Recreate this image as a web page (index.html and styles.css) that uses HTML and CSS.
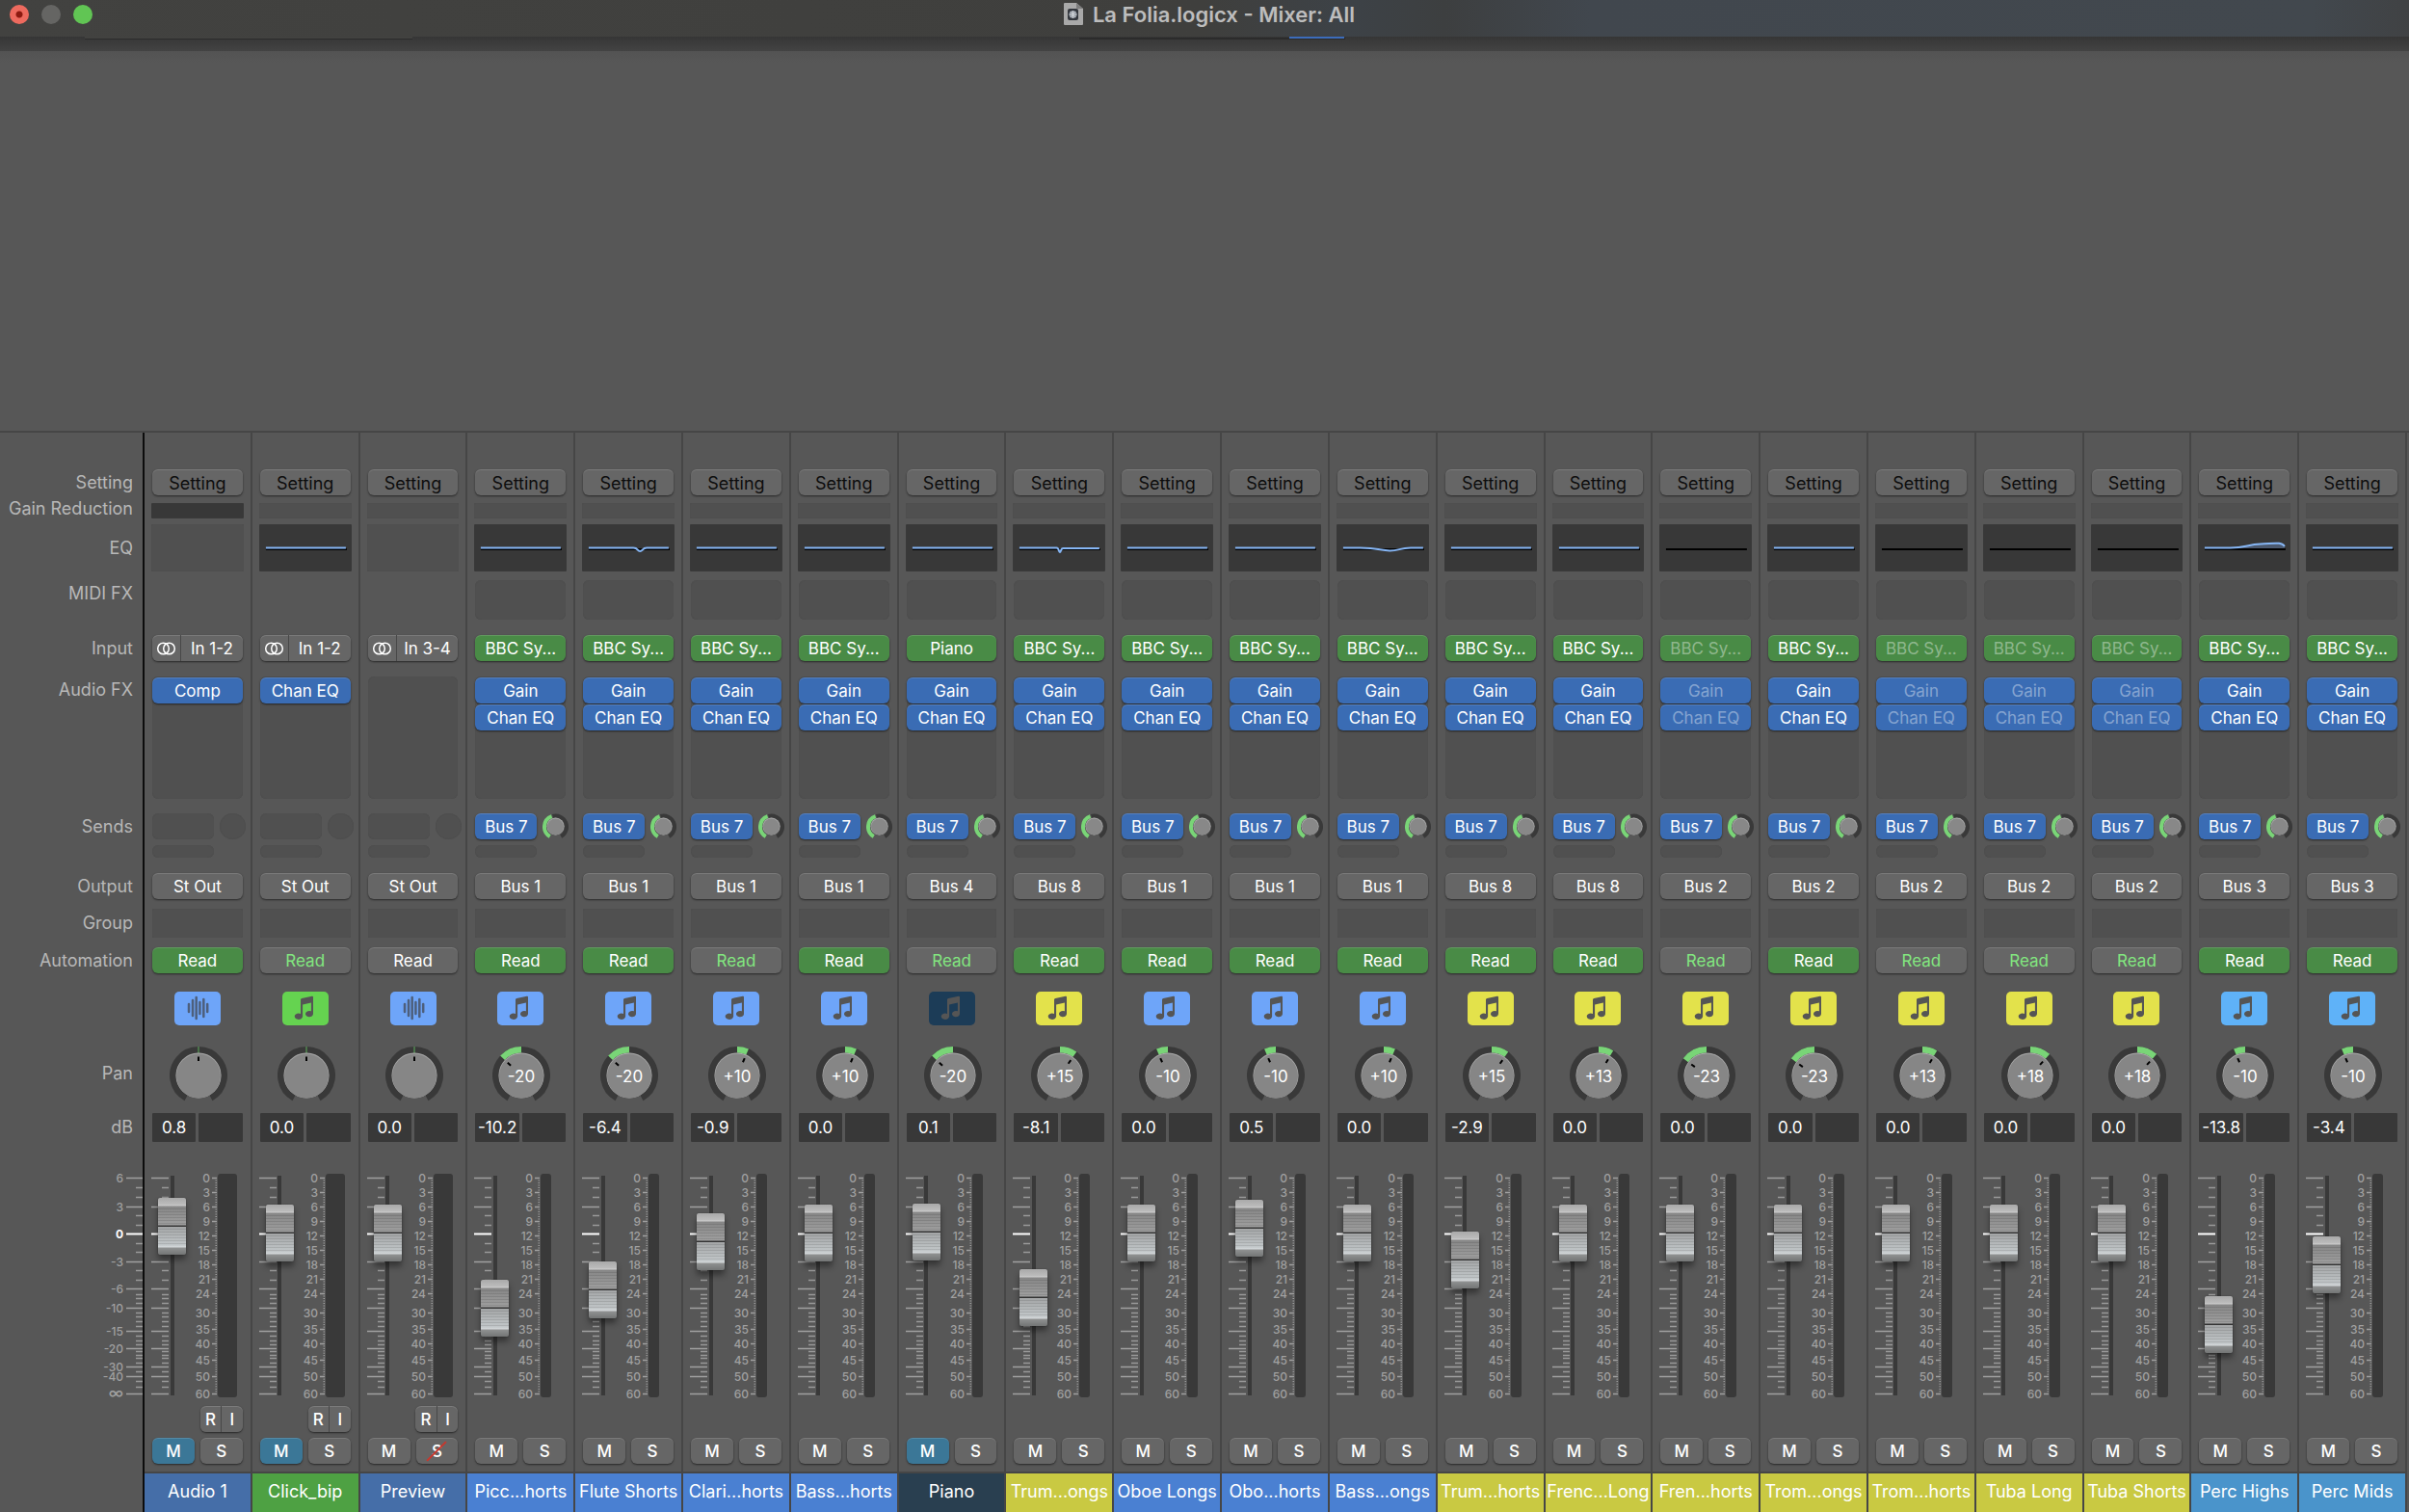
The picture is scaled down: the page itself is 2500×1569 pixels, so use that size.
FILE: index.html
```
<!DOCTYPE html>
<html lang="en">
<head>
  <meta charset="UTF-8">
  <meta name="viewport" content="width=device-width, initial-scale=1.0">
  <title>La Folia.logicx - Mixer: All</title>
  <link rel="stylesheet" href="styles.css">
</head>
<body>
  <header class="titlebar">
    <div class="lights">
      <button class="light close" aria-label="Close"></button>
      <button class="light minimize" aria-label="Minimize"></button>
      <button class="light zoom" aria-label="Zoom"></button>
    </div>
    <h1 class="title">
      <svg class="doc" viewBox="0 0 20 23" aria-hidden="true">
        <path d="M1 0h12l7 6v16a1 1 0 0 1-1 1H1a1 1 0 0 1-1-1V1a1 1 0 0 1 1-1z" fill="#a9a9a9"/>
        <path d="M13 0l7 6h-6a1 1 0 0 1-1-1z" fill="#7d7d7d"/>
        <rect x="4" y="6" width="11" height="12" rx="2" fill="#33373d"/>
        <circle cx="9.5" cy="12" r="4" fill="#8c929b"/>
        <path d="M9.500 8v8M5.500 12h8M7 9l5 6M12 9l-5 6" stroke="#cfd3d8" stroke-width="1"/>
      </svg>
      La Folia.logicx - Mixer: All
    </h1>
  </header>
  <div class="shade"></div>
  <main class="mixer">
    <div class="labels">
      <span>Setting</span>
      <span class="l-gr">Gain Reduction</span>
      <span class="l-eq">EQ</span>
      <span>MIDI FX</span>
      <span>Input</span>
      <span>Audio FX</span>
      <span>Sends</span>
      <span>Output</span>
      <span class="l-group">Group</span>
      <span>Automation</span>
      <span></span>
      <span class="l-pan">Pan</span>
      <span class="l-group">dB</span>
      <div id="ruler"></div>
    </div>
    <div class="strips" id="strips"></div>
  </main>
  <script src="script.js"></script>
</body>
</html>
```
FILE: styles.css
```
*{
  box-sizing: border-box;
}
:root{
  /* one row for each section of a strip, shared with the label column */
  --rows: 35px 22px 58px 57px 43px 142px 62px 37px 40px 46px 57px 69px 63px 241px 33px 35px 42px;
}
body{
  margin: 0;
  min-height: 100vh;
  display: flex;
  flex-direction: column;
  background-color: #575757;
  font-family: Inter, "Liberation Sans", sans-serif;
  font-size: 17px;
  color: #fff;
}
button, input{
  font: inherit;
  color: inherit;
  border: 0;
  padding: 0;
  margin: 0;
}
svg{
  display: block;
}
/* title bar */
.titlebar{
  height: 38px;
  padding: 0 0 9px 10px;
  display: grid;
  grid-template-columns: 1fr auto 1fr;
  align-items: center;
  background: linear-gradient(90deg, #424240 0%, #3f3f3d 50%, #3d4247 56%, #3d3f40 60%, #41474e 66%, #42484e 96%, #404244 100%);
}
.lights{
  display: flex;
  gap: 13px;
}
.light{
  width: 20px;
  height: 20px;
  border-radius: 50%;
}
.close{
  background: radial-gradient(circle, #8c1a10 3px, #ed6a5e 4px);
}
.minimize{
  background-color: #656563;
}
.zoom{
  background-color: #61c554;
}
.title{
  margin: 0;
  display: flex;
  align-items: center;
  gap: 10px;
  font-size: 22px;
  font-weight: 600;
  line-height: 26px;
  color: #bdbdbd;
}
.doc{
  width: 20px;
  height: 23px;
}
.shade{
  height: 15px;
  background:
    linear-gradient(#424240, #424240) 88px 0 / 340px 2px no-repeat,
    linear-gradient(#2b2b2b, #2b2b2b) 88px 2px / 340px 1px no-repeat,
    linear-gradient(#3c6cbb, #3c6cbb) 1338px 0 / 57px 2px no-repeat,
    linear-gradient(#2b2b2b, #2b2b2b) 1120px 1px / 276px 2px no-repeat,
    linear-gradient(#363636, #434343);
}
/* mixer */
.mixer{
  flex: 1;
  display: flex;
  align-items: flex-end;
  background: linear-gradient(#535353, #575757 12px);
}
.labels, .strips{
  border-top: 2px solid #464646;
}
.labels{
  width: 150px;
  flex: none;
  display: grid;
  grid-template-rows: var(--rows);
  justify-items: end;
  padding-top: 38px;
  color: #b8b8b8;
  font-size: 18px;
  line-height: 28px;
  background: linear-gradient(#0c0c0c, #0c0c0c) right / 2px 100% no-repeat;
}
.labels span{
  padding-right: 12px;
  white-space: nowrap;
}
.labels .l-gr{
  line-height: 12px;
}
.labels .l-eq{
  line-height: 50px;
}
.labels .l-group{
  line-height: 30px;
}
.labels .l-pan{
  line-height: 56px;
}
.strips{
  flex: 1;
  display: grid;
  grid-template-columns: repeat(21, minmax(0, 1fr));
  padding-right: 2px;
}
.strip{
  display: grid;
  grid-template-rows: var(--rows);
  grid-template-columns: minmax(0, 1fr);
  align-items: start;
  padding-top: 38px;
  border-right: 2px solid #464646;
}
.strip > *{
  margin: 0 8px;
}
.strip > .wide{
  margin: 0 7px;
}
/* buttons */
.btn{
  display: block;
  width: 100%;
  height: 27px;
  border-radius: 6px;
  background-color: #666;
  line-height: 29px;
  text-align: center;
  white-space: nowrap;
  overflow: hidden;
  box-shadow: 0 1px 2px rgba(0, 0, 0, .55), inset 0 1px 0 rgba(255, 255, 255, .14);
}
.blue{
  background-color: #3a6cb4;
}
.green{
  background-color: #498b46;
}
.setting{
  font-size: 18px;
  color: #0d0d0d;
}
.read-text{
  color: #82e67f;
}
.dim{
  color: rgba(255, 255, 255, .4);
}
.slot{
  height: 41px;
  border-radius: 6px;
  background-color: #505050;
  box-shadow: inset 0 0 1px #474747;
}
.square{
  border-radius: 1px;
}
.gr{
  height: 16px;
}
.gr.active{
  background-color: #383838;
}
.eq{
  height: 49px;
}
.eq.active{
  background-color: #383838;
}
.eq svg{
  width: 100%;
  height: 49px;
}
.fx{
  height: 127px;
  display: flex;
  flex-direction: column;
  gap: 1px;
  padding-top: 1px;
}
.group{
  height: 30px;
}
.input, .rec{
  display: flex;
  border-radius: 6px;
  box-shadow: 0 1px 2px rgba(0, 0, 0, .55);
}
.input .btn, .rec .btn{
  box-shadow: inset 0 1px 0 rgba(255, 255, 255, .14);
}
.input .btn:first-child, .rec .btn:first-child{
  border-radius: 6px 0 0 6px;
  border-right: 1px solid #484848;
}
.input .btn:last-child, .rec .btn:last-child{
  border-radius: 0 6px 6px 0;
}
.input .btn:first-child{
  flex: 0 0 30px;
}
.format{
  width: 21px;
  height: 14px;
  margin: 0 auto;
}
/* sends */
.sends{
  display: grid;
  grid-template-columns: 64px 27px;
  column-gap: 6px;
  row-gap: 6px;
}
.sends .bus-slot{
  height: 27px;
}
.sends .next{
  height: 13px;
}
.sends .no-knob{
  height: 27px;
  border-radius: 50%;
}
/* track icon */
.strip > .icon{
  justify-self: center;
  width: 48px;
  height: 35px;
  border-radius: 5px;
}
.icon.c-audio, .icon.c-blue{
  background-color: #6ea5f9;
}
.icon.c-click{
  background-color: #65d350;
}
.icon.c-piano{
  background-color: #1c3c57;
}
.icon.c-yellow{
  background-color: #e3e24b;
}
.icon.c-perc{
  background-color: #5fb2f8;
}
.strip > .pan{
  justify-self: center;
  margin: 0 7px 0 9px;
  width: 60px;
  height: 60px;
}
.pan text{
  font-size: 17px;
  fill: #fff;
  text-anchor: middle;
}
/* level and peak */
.db{
  display: flex;
  gap: 3px;
}
.db input, .db output{
  width: 50%;
  height: 30px;
  border-radius: 1px;
  background-color: #383838;
  text-align: center;
}
/* fader */
.strip > .level{
  margin: 0 0 0 7px;
  height: 232px;
  display: flex;
  align-items: center;
}
.level svg, #ruler svg{
  height: 232px;
  flex: none;
  overflow: visible;
}
.ticks{
  width: 18px;
}
.scale{
  width: 33px;
}
.ruler{
  width: 62px;
}
.scale text, .ruler text{
  font-size: 12px;
  font-weight: 500;
  fill: #a0a0a0;
  text-anchor: end;
}
.ruler .unity{
  font-weight: 700;
  fill: #fff;
}
.ruler .infinity{
  font-size: 16px;
}
.fader{
  appearance: none;
  writing-mode: vertical-lr;
  direction: rtl;
  flex: none;
  width: 29px;
  height: 287px;
  margin-left: -11px;
  background: linear-gradient(#393939, #393939) center / 4px 228px no-repeat;
}
.fader::-webkit-slider-thumb{
  appearance: none;
  width: 29px;
  height: 59px;
  border-radius: 2px;
  background:
    repeating-linear-gradient(transparent 0 2px, rgba(0, 0, 0, .1) 2px 3px) 0 9px / 100% 41px no-repeat,
    linear-gradient(#a9a9a9 0, #bcbcbc 7px, #cfcfcf 8px, #868686 9px, #9f9f9f 28px, #3a3a3a 29px, #3a3a3a 30px, #a3a5a6 30px, #c2c7c9 49px, #d5d9db 51px, #8f9191 52px, #737575 59px);
  box-shadow: 0 5px 6px rgba(0, 0, 0, .4), 0 0 1px #222;
}
.meter{
  width: 11px;
  height: 232px;
  border-radius: 3px;
  background-color: #393939;
}
.meter.stereo{
  width: 20px;
}
.rec{
  width: 44px;
  justify-self: end;
}
.rec .btn, .ms .btn{
  font-weight: 500;
}
.ms{
  display: flex;
  gap: 6px;
}
.ms .muted{
  background-color: #3b7797;
}
/* red strike over the S of a solo safe track */
.solo-safe{
  position: relative;
}
.solo-safe::after{
  content: "";
  position: absolute;
  top: 50%;
  left: 50%;
  width: 28px;
  height: 2px;
  margin: -1px 0 0 -14px;
  background-color: #c8372d;
  rotate: -45deg;
}
.strip > .name{
  margin: 0;
  height: 42px;
  border-top: 2px solid #464646;
  font-size: 18px;
  line-height: 38px;
  text-align: center;
  white-space: nowrap;
  overflow: hidden;
}
.name.c-audio{
  background-color: #456ea8;
}
.name.c-click{
  background-color: #4ea143;
}
.name.c-blue{
  background-color: #4a80d2;
}
.name.c-piano{
  background-color: #293f50;
}
.name.c-yellow{
  background-color: #c9c942;
}
.name.c-perc{
  background-color: #4a94cb;
}
```
FILE: script.js
```
// auto: "on" = green button, "text" = green text, "off" = plain
const tracks=[
  {name:"Audio 1",color:"audio",input:"In 1-2",fx:["Comp"],out:"St Out",auto:"on",db:"0.8",mute:true,gr:true},
  {name:"Click_bip",color:"click",input:"In 1-2",fx:["Chan EQ"],out:"St Out",auto:"text",db:"0.0",mute:true,eq:"flat"},
  {name:"Preview",color:"audio",input:"In 3-4",fx:[],out:"St Out",auto:"off",db:"0.0",safe:true},
  {name:"Picc...horts",color:"blue",out:"Bus 1",auto:"on",pan:-20,db:"-10.2",eq:"flat"},
  {name:"Flute Shorts",color:"blue",out:"Bus 1",auto:"on",pan:-20,db:"-6.4",eq:"dip"},
  {name:"Clari...horts",color:"blue",out:"Bus 1",auto:"text",pan:10,db:"-0.9",eq:"flat"},
  {name:"Bass...horts",color:"blue",out:"Bus 1",auto:"on",pan:10,db:"0.0",eq:"flat"},
  {name:"Piano",color:"piano",inst:"Piano",out:"Bus 4",auto:"text",pan:-20,db:"0.1",eq:"flat",mute:true},
  {name:"Trum...ongs",color:"yellow",out:"Bus 8",auto:"on",pan:15,db:"-8.1",eq:"notch"},
  {name:"Oboe Longs",color:"blue",out:"Bus 1",auto:"on",pan:-10,db:"0.0",eq:"flat"},
  {name:"Obo...horts",color:"blue",out:"Bus 1",auto:"on",pan:-10,db:"0.5",eq:"flat"},
  {name:"Bass...ongs",color:"blue",out:"Bus 1",auto:"on",pan:10,db:"0.0",eq:"scoop"},
  {name:"Trum...horts",color:"yellow",out:"Bus 8",auto:"on",pan:15,db:"-2.9",eq:"flat"},
  {name:"Frenc...Long",color:"yellow",out:"Bus 8",auto:"on",pan:13,db:"0.0",eq:"flat"},
  {name:"Fren...horts",color:"yellow",out:"Bus 2",auto:"text",pan:-23,db:"0.0",eq:"none",dim:true},
  {name:"Trom...ongs",color:"yellow",out:"Bus 2",auto:"on",pan:-23,db:"0.0",eq:"flat"},
  {name:"Trom...horts",color:"yellow",out:"Bus 2",auto:"text",pan:13,db:"0.0",eq:"none",dim:true},
  {name:"Tuba Long",color:"yellow",out:"Bus 2",auto:"text",pan:18,db:"0.0",eq:"none",dim:true},
  {name:"Tuba Shorts",color:"yellow",out:"Bus 2",auto:"text",pan:18,db:"0.0",eq:"none",dim:true},
  {name:"Perc Highs",color:"perc",out:"Bus 3",auto:"on",pan:-10,db:"-13.8",eq:"shelf"},
  {name:"Perc Mids",color:"perc",out:"Bus 3",auto:"on",pan:-10,db:"-3.4",eq:"flat"}
]

// fader scale: [dB, y]
const faderMarks=[[6,4],[3,34],[0,62],[-3,91],[-6,119],[-10,139],[-15,163],[-20,181],[-30,200],[-40,210],["∞",228]]
const minorMarks=[14,24,43,53,72,81,100,110,125,129,134,144,148,153,158,168,173,177,184,188,191,196,205,215,221]
// meter scale: [dB, y]
const meterMarks=[[0,4],[3,19],[6,34],[9,49],[12,64],[15,79],[18,94],[21,109],[24,124],[30,144],[35,161],[40,176],[45,193],[50,210],[60,228]]

const curves={
  flat:"M7 24.500H91",
  dip:"M7 24.500H54C59 24.500 58 28 61 28S63 24.500 68 24.500H91",
  notch:"M7 24.500H46C49 24.500 48 29 49.500 29S50 25 53 25H91",
  scoop:"M7 24.500H25C44 24.500 46 27.500 56 27.500S66 24.500 78 24.500H91",
  shelf:"M7 24.500H34C50 24.500 52 21 66 20.500S88 18 91 23"
}

// fader y for a dB value, from the marks around it
const faderY=(db)=>{
  for(let i=0;i<faderMarks.length-2;i++){
    const [a,ya]=faderMarks[i]
    const [b,yb]=faderMarks[i+1]
    if(db<=a&&db>=b) return ya+(a-db)/(a-b)*(yb-ya)
  }
  return 228
}

const tickLines=(x1,xs,x2)=>{
  const major=faderMarks.map(([db,y])=>`<path d="M${x1} ${y+.5}H${x2}" stroke="${db===0?"#fff":"#a0a0a0"}" stroke-width="${db===0?2:1.5}"/>`).join("")
  const minor=minorMarks.map(y=>`M${xs} ${y+.5}H${x2}`).join("")
  return `${major}<path d="${minor}" stroke="#999" stroke-width="1.5"/>`
}

const scale=()=>{
  let dots=""
  meterMarks.forEach(([,y],i)=>{
    if(i==meterMarks.length-1) return
    const gap=meterMarks[i+1][1]-y
    const n=Math.round(gap/2.5)
    for(let k=1;k<n;k++) dots+=`M30.500 ${(y+.5+gap*k/n).toFixed(1)}H32`
  })
  const labels=meterMarks.map(([db,y])=>`<text x="25" y="${y+5}">${db}</text>`).join("")
  const lines=meterMarks.map(([,y])=>`M27 ${y+.5}H32`).join("")
  return `<svg class="scale" viewBox="0 0 33 232">${labels}<path d="${lines}" stroke="#a0a0a0" stroke-width="1.5"/><path d="${dots}" stroke="#a0a0a0"/></svg>`
}

// point on a circle, angle in degrees from twelve o'clock
const point=(cx,cy,r,deg)=>{
  const a=deg*Math.PI/180
  return `${(cx+r*Math.sin(a)).toFixed(2)} ${(cy-r*Math.cos(a)).toFixed(2)}`
}
const arc=(cx,cy,r,from,to)=>`M${point(cx,cy,r,from)}A${r} ${r} 0 ${to-from>180?1:0} 1 ${point(cx,cy,r,to)}`

const panKnob=(pan)=>{
  const deg=(pan||0)*150/64
  const fill=pan?`<path d="${arc(30,30,26.7,Math.min(0,deg),Math.max(0,deg))}" fill="none" stroke="#79d577" stroke-width="6.500"/>`
    :`<path d="M30 0V7" stroke="#5fae5d"/>`
  const text=pan?`<text x="30" y="37">${pan>0?"+"+pan:pan}</text>`:""
  return `<svg class="pan" viewBox="0 0 60 60" role="img" aria-label="Pan ${pan||0}">
    <path d="${arc(30,30,26.7,-151,151)}" fill="none" stroke="#393939" stroke-width="6.500"/>${fill}
    <circle cx="30" cy="30" r="23.500" fill="#a9a9a9"/><circle cx="30" cy="30.500" r="23" fill="#868686"/>
    <path d="M${point(30,30,19.5,deg)}L${point(30,30,15,deg)}" stroke="#000" stroke-width="2"/>${text}</svg>`
}

const sendKnob=`<svg viewBox="0 0 27 27" role="img" aria-label="Send level">
  <path d="${arc(13.5,14,11.5,-15,150)}" fill="none" stroke="#393939" stroke-width="4"/>
  <path d="${arc(13.5,14,11.5,-150,-20)}" fill="none" stroke="#79d577" stroke-width="4"/>
  <circle cx="13.500" cy="13.500" r="9" fill="#b0b0b0"/><circle cx="13.500" cy="14" r="8.500" fill="#888"/></svg>`

const noteIcon=`<path d="M19 8.500Q19 7.200 20.200 6.900L30.800 4.700Q32 4.500 32 5.700V23A4 3.200 0 1 1 29.900 20.300V11.600L21.100 13.500V25.800A4.200 3.200 0 1 1 19 22.900z" fill="#555"/>`
const waveIcon=`<path d="M15 13V21M19 9V25M22.700 6V28M26.400 11V23M30.300 8V26M34.200 13V21" stroke="#4d5f7c" stroke-width="2.500" stroke-linecap="round"/>`

const eq=(type)=>{
  if(!type) return `<div class="slot square eq wide"></div>`
  const area=type=="shelf"?`<path d="M34 24.500C50 24.500 52 21 66 20.500S88 18 91 23V25H34z" fill="#4c5a70"/>`:""
  const line=curves[type]?`<path d="${curves[type]}" fill="none" stroke="#86b6f5" stroke-width="2"/>`:""
  return `<div class="slot square eq active wide"><svg viewBox="0 0 97 49" preserveAspectRatio="none" aria-hidden="true">
    <path d="M7 26H92" stroke="#000" stroke-width="2"/>${area}${line}</svg></div>`
}

const strip=(t)=>{
  const audio=!!t.input
  const dim=t.dim?" dim":""
  const fx=t.fx||["Gain","Chan EQ"]
  const input=audio?`<div class="input">
      <button class="btn" aria-label="Stereo"><svg class="format" viewBox="0 0 21 14"><circle cx="7.500" cy="7" r="5.800" fill="none" stroke="#fff" stroke-width="1.500"/><circle cx="13.500" cy="7" r="5.800" fill="none" stroke="#fff" stroke-width="1.500"/></svg></button>
      <button class="btn">${t.input}</button></div>`
    :`<button class="btn green${dim}">${t.inst||"BBC Sy..."}</button>`
  const sends=audio?`<div class="slot bus-slot"></div><div class="slot no-knob"></div>`
    :`<button class="btn blue">Bus 7</button>${sendKnob}`
  const auto={on:"green",text:"read-text",off:""}[t.auto]
  return `<section class="strip" aria-label="${t.name}">
    <div><button class="btn setting">Setting</button></div>
    <div class="slot square gr wide${t.gr?" active":""}"></div>
    ${eq(t.eq)}
    <div class="${audio?"":"slot"}"></div>
    <div>${input}</div>
    <div class="slot fx">${fx.map(f=>`<button class="btn blue${dim}">${f}</button>`).join("")}</div>
    <div class="sends">${sends}<div class="slot next"></div></div>
    <div><button class="btn">${t.out}</button></div>
    <div class="slot square group"></div>
    <div><button class="btn ${auto}">Read</button></div>
    <svg class="icon c-${t.color}" viewBox="0 0 48 35" aria-hidden="true">${t.color=="audio"?waveIcon:noteIcon}</svg>
    ${panKnob(t.pan)}
    <div class="db"><input value="${t.db}" aria-label="Volume dB"><output></output></div>
    <div class="level">
      <svg class="ticks" viewBox="0 0 18 232">${tickLines(0,11,18)}</svg>
      <input class="fader" type="range" min="0" max="228" value="${Math.round(231-faderY(Number(t.db)))}" aria-label="Volume">
      ${scale()}
      <div class="meter${audio?" stereo":""}"></div>
    </div>
    <div class="${audio?"rec":""}">${audio?`<button class="btn">R</button><button class="btn">I</button>`:""}</div>
    <div class="ms"><button class="btn${t.mute?" muted":""}">M</button><button class="btn${t.safe?" solo-safe":""}">S</button></div>
    <div class="name c-${t.color}">${t.name}</div>
  </section>`
}

document.querySelector("#strips").innerHTML=tracks.map(strip).join("")

const rulerClass={"0":"unity","∞":"infinity"}
const rulerText=faderMarks.map(([db,y])=>`<text x="40" y="${y+5}" class="${rulerClass[db]||""}">${db}</text>`).join("")
document.querySelector("#ruler").innerHTML=`<svg class="ruler" viewBox="0 0 62 232">${rulerText}${tickLines(43,53,60)}</svg>`
```
